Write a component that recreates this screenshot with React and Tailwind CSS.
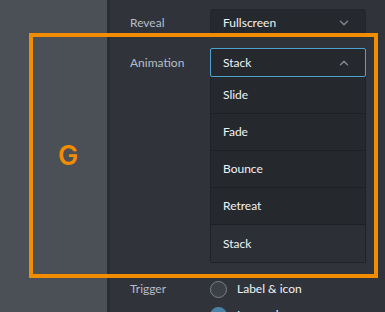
import { ChevronDown, ChevronUp } from 'lucide-react';

const options = ['Slide', 'Fade', 'Bounce', 'Retreat', 'Stack'];

const App = () => {
    const selected = 'Stack';

    return (
        <div className="relative w-[385px] h-[312px] overflow-hidden flex bg-[#30343a] font-['Lato','Noto_Sans',sans-serif] text-[12px]">
            {/* left side rail */}
            <div className="w-[107px] h-full bg-[#4b4f56]" />
            <div className="w-[3px] h-full bg-[#2a2d33]" />

            {/* settings panel */}
            <div className="flex-1 pl-[20px] pt-[9px]">
                <div className="flex items-center h-[28px]">
                    <span className="w-[80px] text-[#b5bccb]">Reveal</span>
                    <div className="w-[156px] h-[28px] flex items-center justify-between pl-[12px] pr-[14px] bg-[#25282d] border border-[#23262b] rounded-[2px] text-[#f1f3f6]">
                        <span>Fullscreen</span>
                        <ChevronDown size={14} strokeWidth={2.5} className="text-[#80868f]" />
                    </div>
                </div>

                <div className="flex mt-[11px]">
                    <span className="w-[80px] h-[29px] flex items-center text-[#b5bccb]">Animation</span>
                    <div className="w-[156px]">
                        <div className="h-[29px] flex items-center justify-between pl-[12px] pr-[14px] bg-[#25282d] border border-[#4ea1cf] rounded-[2px] text-[#f1f3f6]">
                            <span>{selected}</span>
                            <ChevronUp size={14} strokeWidth={2.5} className="text-[#80868f]" />
                        </div>
                        <div className="border-x border-b border-[#1f2226] rounded-b-[2px] text-[#f1f3f6]">
                            {options.map((opt, i) => (
                                <div
                                    key={opt}
                                    className={`h-[37px] flex items-center pl-[12px] ${i < options.length - 1 ? 'border-b border-[#1d2024]' : ''} ${opt === selected ? 'bg-[#2c3036]' : 'bg-[#25282d]'}`}
                                >
                                    {opt}
                                </div>
                            ))}
                        </div>
                    </div>
                </div>

                <div className="flex mt-[17px]">
                    <span className="w-[80px] h-[17px] flex items-center text-[#b5bccb]">Trigger</span>
                    <div className="flex flex-col gap-[8px]">
                        <div className="flex items-center gap-[10px] text-[#f1f3f6]">
                            <span className="w-[17px] h-[17px] rounded-full border border-[#7a8089] bg-[#3b3f46]" />
                            <span>Label &amp; icon</span>
                        </div>
                        <div className="flex items-center gap-[10px] text-[#f1f3f6]">
                            <span className="w-[17px] h-[17px] rounded-full bg-[#4a82a6]" />
                            <span>Icon only</span>
                        </div>
                    </div>
                </div>
            </div>

            {/* annotation overlay */}
            <div className="absolute left-[29px] top-[33px] w-[349px] h-[245px] border-4 border-[#f28c00] flex">
                <div className="w-[70px] h-full flex items-center justify-center">
                    <span className="text-[#f28c00] text-[27px] font-semibold font-['Inter',sans-serif] leading-none">G</span>
                </div>
            </div>
        </div>
    );
};

export default App;
